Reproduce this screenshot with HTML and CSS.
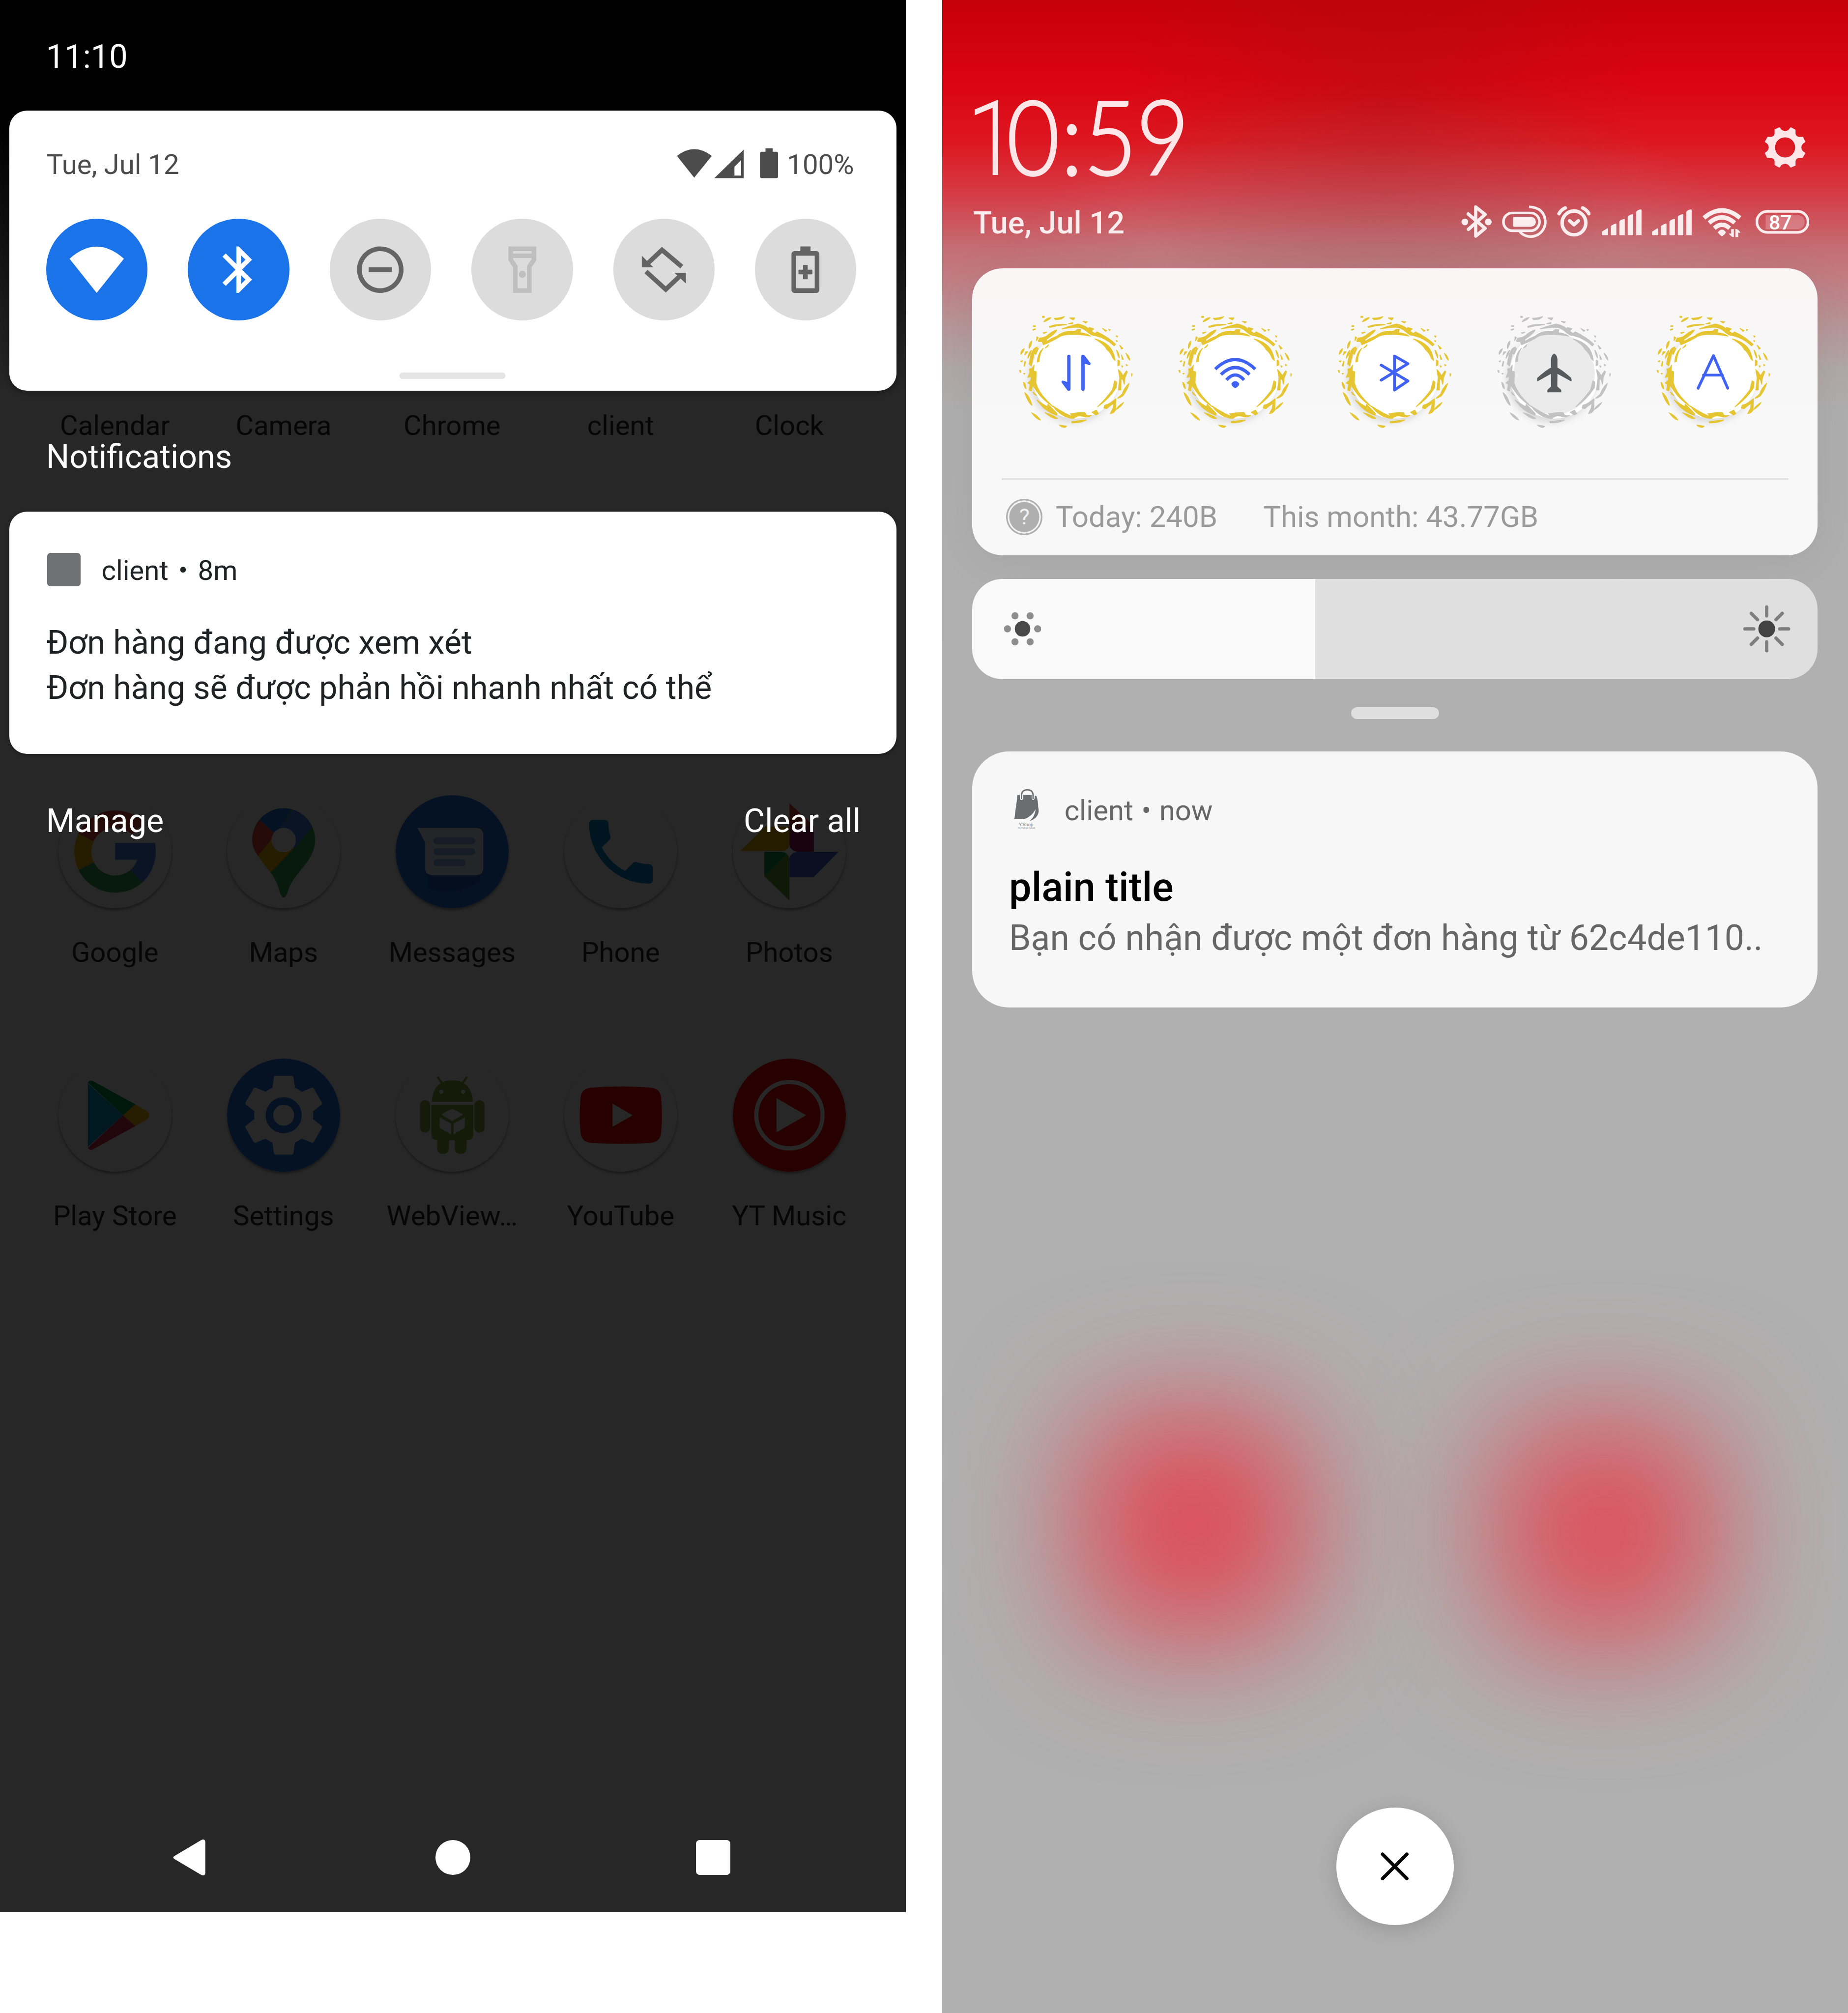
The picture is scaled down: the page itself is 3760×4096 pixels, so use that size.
FILE: index.html
```html
<!DOCTYPE html>
<html lang="vi">
<head>
<meta charset="utf-8">
<title>Notifications</title>
<link rel="stylesheet" href="styles.css">
</head>
<body>
<svg class="defs" aria-hidden="true">
  <symbol id="ring" viewBox="0 0 930 900">
    <g fill="currentColor" stroke="currentColor" stroke-width="6" stroke-linejoin="round">
      <path d="M365 148Q420 128 478 114Q520 120 555 148L560 138L592 148L575 164Q585 172 600 182L615 170Q690 205 748 258L738 270Q680 215 600 196Q575 196 545 168Q510 138 475 136Q420 138 365 148z"/>
      <path d="M195 235L205 215Q240 212 262 195Q295 165 328 156Q318 180 255 222L252 240Q290 215 330 200Q370 165 432 164Q465 168 472 154L498 154L494 176Q540 180 568 200Q520 190 470 188Q400 182 355 200Q300 235 232 262L222 238L200 240z"/>
      <path d="M600 220Q660 235 700 272Q735 305 745 375L730 360Q715 320 685 295Q670 262 600 220z"/>
      <path d="M188 278Q165 310 160 350Q150 390 145 412L130 400Q138 340 155 305Q165 285 188 278z"/>
      <path d="M230 288Q205 320 200 380L188 385Q192 320 230 288z"/>
      <path d="M165 408L162 450L180 455L178 535Q195 600 260 665L300 705Q230 655 200 615Q165 570 155 548L145 592L130 585L138 545L120 535L142 518L145 490L120 495L135 460L132 435L150 432z"/>
      <path d="M185 658Q215 680 260 705L265 688Q290 715 330 755L325 766Q270 745 225 705z"/>
      <path d="M300 700Q370 745 425 770L440 775L425 755Q490 745 530 748L538 765Q560 772 575 768Q540 785 510 772Q470 765 450 788Q420 790 380 772Q330 745 300 700z"/>
      <path d="M580 745L610 730L625 755L608 764z"/>
      <path d="M665 715L670 695Q710 685 750 648L748 730Q735 750 710 755L730 715L735 680Q705 700 685 718z"/>
      <path d="M742 520L755 530L752 570Q700 650 620 705Q690 635 725 585z"/>
      <path d="M768 440Q790 460 800 485L825 450L832 455L815 500L810 545L802 515L788 500L785 585H768L778 500z"/>
      <path d="M765 372L776 378V405L764 412z"/>
      <path d="M845 538Q835 580 800 628Q780 642 762 645L795 615Q810 570 845 538z"/>
      <path d="M805 675Q790 705 752 725Q765 700 805 675zM245 748Q300 765 332 788Q310 800 245 748zM435 812Q490 805 538 800Q500 822 435 820zM98 605Q130 625 150 695Q125 680 98 605zM148 748Q190 768 210 800Q185 798 148 748zM345 835L398 845L385 854Q355 850 345 835z"/>
      <path d="M235 97Q250 72 285 67Q275 85 235 97zM308 72Q350 72 382 60Q370 82 318 82zM420 70L456 70L445 84zM515 94L546 98L535 106zM275 132Q320 112 398 118Q330 124 278 138zM411 110L442 104L440 112zM130 288Q125 255 148 235Q148 265 130 288zM70 330Q70 300 94 290Q90 315 70 330zM98 335L105 312L120 312zM120 358Q125 320 145 302L140 328zM90 530Q108 545 108 578Q92 565 90 530zM158 600L182 625L165 615zM655 145L684 162L675 166zM778 266L800 288L790 293zM755 300Q775 325 774 355Q762 335 755 300zM823 323Q848 345 850 372Q835 360 823 323zM790 335L804 365L796 366zM92 412L100 380L104 384L98 415zM185 205L195 212L182 232z"/>
      <path d="M225 58h13v8h-13zM160 125h14v6h-14zM156 153l17-5v5l-14 6zM230 176l25-4-20 10zM698 152l13 2-8 7zM752 198l10 3-3 7zM752 232l9 3-4 5zM70 380l12-4-4 8zM62 445l8 2v14l-6-6zM90 468l10-2-4 6zM862 468l6 4-5 15zM824 402l9 6-8 2zM791 412l9 2-4 8zM170 325L190 285L195 290L178 330zM245 285L268 262L262 275z"/>
    </g>
  </symbol>
  <symbol id="bluetooth" viewBox="0 0 24 24"><path d="M17.71 7.71L12 2h-1v7.59L6.41 5 5 6.41 10.59 12 5 17.59 6.41 19 11 14.41V22h1l5.71-5.71-4.3-4.29 4.3-4.29zM13 5.83l1.88 1.88L13 9.59V5.83zm1.88 10.46L13 18.17v-3.76l1.88 1.88z"/></symbol>
  <symbol id="bars" viewBox="1043 260 290 240"><g fill="currentColor"><path d="M1047 455L1088 430Q1092 430 1092 436V476Q1092 480 1087 480H1052Q1047 480 1047 475z"/><path d="M1112 416Q1114 408 1146 397Q1151 397 1151 402V475Q1151 480 1146 480H1117Q1112 480 1112 475z"/><path d="M1172 382Q1176 372 1206 363Q1211 363 1211 368V475Q1211 480 1206 480H1177Q1172 480 1172 475z"/><path d="M1232 348Q1238 336 1267 329Q1271 329 1271 335V475Q1271 480 1266 480H1237Q1232 480 1232 475z"/><path d="M1292 314Q1298 300 1326 295Q1331 295 1331 301V475Q1331 480 1326 480H1297Q1292 480 1292 475z"/></g></symbol>
</svg>

<main class="board">
  <section class="phone phone-dark">
    <div class="apps">
      <div class="app-row">
        <span class="app-label">Calendar</span><span class="app-label">Camera</span><span class="app-label">Chrome</span><span class="app-label">client</span><span class="app-label">Clock</span>
      </div>
      <div class="app-row app-row-first">
        <div class="app">
          <svg class="app-icon on-white" viewBox="-135 -135 270 270"><g fill="none" stroke-width="41"><path stroke="#ea4335" d="M-70-33A77 77 0 0 1 55-55"/><path stroke="#fbbc05" d="M-69 34A77 77 0 0 1-69-34"/><path stroke="#34a853" d="M52 57A77 77 0 0 1-69 34"/><path stroke="#4285f4" d="M76 0A77 77 0 0 1 51 58"/></g><path fill="#4285f4" d="M0-21H95Q99 0 95 19H0z"/></svg>
          <span class="app-label">Google</span>
        </div>
        <div class="app">
          <svg class="app-icon on-white" viewBox="-135 -135 270 270"><clipPath id="pin"><path d="M-75-28A75 76 0 0 1 75-28C75 25 20 50 9 98Q0 121-9 98C-16 65-34 45-44 33C-62 8-75-5-75-28z"/></clipPath><g clip-path="url(#pin)"><path fill="#34a853" d="M-80-110H80V120H-80z"/><path fill="#fbbc04" d="M-80 14L-20-50L28-12L-36 54z"/><path fill="#ea4335" d="M-80-110L-57-75L-19-42L-66 16H-90z"/><path fill="#1a73e8" d="M-57-76V-120H30L-19-42z"/><path fill="#4285f4" d="M26-106H90V-62H70L26-8L-22-40z"/></g><circle cy="-28" r="29" fill="#fff"/></svg>
          <span class="app-label">Maps</span>
        </div>
        <div class="app">
          <svg class="app-icon" viewBox="-135 -135 270 270"><circle r="135" fill="#1a73e8"/><path d="M-60 50V85Q0 110 65 70V40z" fill="#1256b8" opacity=".7"/><path fill="#e8f0fe" d="M-83-57H55Q74-57 74-40V38Q74 56 55 56H-45Q-65 56-65 38V-22z"/><path stroke="#8ab4f8" stroke-width="16" stroke-linecap="round" d="M-37-26H47M-37 0H47M-37 26H24"/></svg>
          <span class="app-label">Messages</span>
        </div>
        <div class="app">
          <svg class="app-icon on-white" viewBox="-135 -135 270 270"><g transform="scale(8.44) translate(-12 -12)"><path fill="#0288d1" d="M6.62 10.79c1.44 2.83 3.76 5.14 6.59 6.59l2.2-2.2c.27-.27.67-.36 1.02-.24 1.12.37 2.33.57 3.57.57.55 0 1 .45 1 1V20c0 .55-.45 1-1 1-9.39 0-17-7.61-17-17 0-.55.45-1 1-1h3.5c.55 0 1 .45 1 1 0 1.25.2 2.45.57 3.57.11.35.03.74-.25 1.02l-2.2 2.2z"/></g></svg>
          <span class="app-label">Phone</span>
        </div>
        <div class="app">
          <svg class="app-icon on-white" viewBox="-135 -135 270 270"><path fill="#db4437" d="M0-116L58-62V0L0-56z"/><path fill="#a5155c" d="M0-56L58-62V0H0z"/><path fill="#f4b400" d="M-117-2L-58-60H0V-2z"/><path fill="#3b64d0" d="M0 0H117L58 60H0z"/><path fill="#0f9d58" d="M0 0H-60V58z"/><path fill="#6aa52e" d="M0 0V116L-60 58z"/><path fill="#fff" d="M0-16Q3-3 18 0Q3 3 0 16Q-3 3-18 0Q-3-3 0-16z"/></svg>
          <span class="app-label">Photos</span>
        </div>
      </div>
      <div class="app-row app-row-next">
        <div class="app">
          <svg class="app-icon on-white" viewBox="-135 -135 270 270"><path fill="#00a0c8" d="M-65-76V76L19 0z"/><path fill="#00a050" d="M-65-78Q-60-86-50-80L48-26L19 0z"/><path fill="#ffbc00" d="M48-26L76-10Q88 0 76 10L48 26L19 0z"/><path fill="#d8304a" d="M-65 78Q-60 86-50 80L48 26L19 0z"/></svg>
          <span class="app-label">Play Store</span>
        </div>
        <div class="app">
          <svg class="app-icon" viewBox="-135 -135 270 270"><circle r="135" fill="#1a73e8"/><path fill="#fff" transform="scale(9.4) translate(-12 -12)" d="M19.43 12.98c.04-.32.07-.64.07-.98s-.03-.66-.07-.98l2.11-1.65c.19-.15.24-.42.12-.64l-2-3.46c-.12-.22-.39-.3-.61-.22l-2.49 1c-.52-.4-1.08-.73-1.69-.98l-.38-2.65C14.46 2.18 14.25 2 14 2h-4c-.25 0-.46.18-.49.42l-.38 2.65c-.61.25-1.17.59-1.69.98l-2.49-1c-.23-.09-.49 0-.61.22l-2 3.46c-.13.22-.07.49.12.64l2.11 1.65c-.04.32-.07.65-.07.98s.03.66.07.98l-2.11 1.65c-.19.15-.24.42-.12.64l2 3.46c.12.22.39.3.61.22l2.49-1c.52.4 1.08.73 1.69.98l.38 2.65c.03.24.24.42.49.42h4c.25 0 .46-.18.49-.42l.38-2.65c.61-.25 1.17-.59 1.69-.98l2.49 1c.23.09.49 0 .61-.22l2-3.46c.12-.22.07-.49-.12-.64l-2.11-1.65z"/><circle r="34" fill="none" stroke="#1a73e8" stroke-width="18"/></svg>
          <span class="app-label">Settings</span>
        </div>
        <div class="app">
          <svg class="app-icon on-white" viewBox="-135 -135 270 270"><g fill="#8fa83a"><path d="M-49-32Q-46-82 0-83Q46-82 49-32z"/><path stroke="#8fa83a" stroke-width="5" stroke-linecap="round" d="M-24-76L-34-90M24-76L34-90"/><rect x="-77" y="-36" width="24" height="78" rx="12"/><rect x="53" y="-36" width="24" height="78" rx="12"/><path d="M-50-25H50V44Q50 60 34 60H-34Q-50 60-50 44z"/><rect x="-36" y="50" width="28" height="42" rx="12"/><rect x="6" y="50" width="28" height="42" rx="12"/></g><circle cx="-26" cy="-56" r="5" fill="#fff"/><circle cx="26" cy="-56" r="5" fill="#fff"/><path fill="#fff" d="M0-16L26-2L0 14L-26-2zM-30 5L-3 20V46L-30 30zM30 5L3 20V46L30 30z"/></svg>
          <span class="app-label">WebView…</span>
        </div>
        <div class="app">
          <svg class="app-icon on-white" viewBox="-135 -135 270 270"><path fill="#f00" d="M-70-66Q0-71 70-66Q94-64 96-42Q100 0 96 42Q94 64 70 66Q0 71-70 66Q-94 64-96 42Q-100 0-96-42Q-94-64-70-66z"/><path fill="#fff" d="M-20-28L28 0L-20 28z"/></svg>
          <span class="app-label">YouTube</span>
        </div>
        <div class="app">
          <svg class="app-icon" viewBox="-135 -135 270 270"><circle r="135" fill="#f00"/><circle r="79" fill="none" stroke="#fff" stroke-width="10"/><path fill="#fff" d="M-31-41L40 0L-31 41z"/></svg>
          <span class="app-label">YT Music</span>
        </div>
      </div>
    </div>

    <div class="shade">
      <div class="status-time">11:10</div>
      <div class="quick-panel">
        <div class="quick-head">
          <span>Tue, Jul 12</span>
          <span class="quick-status">
            <svg class="qs-icons" viewBox="1610 353 250 80" fill="#4c4c4c"><path d="M1614 372Q1655 340 1697 372L1655 424z"/><path fill-rule="evenodd" d="M1773 357V425H1703zM1767 382L1751 398V419H1767z"/><path d="M1825 354h17v8h9q4 0 4 4v55q0 4-4 4h-35q-4 0-4-4v-55q0-4 4-4h9z"/></svg>
            <span>100%</span>
          </span>
        </div>
        <div class="tiles">
          <span class="tile tile-on"><svg viewBox="0 0 24 24"><path d="M.3 7.3Q12-3.2 23.7 7.3L12 22z"/></svg></span>
          <span class="tile tile-on"><svg><use href="#bluetooth"/></svg></span>
          <span class="tile"><svg viewBox="0 0 24 24"><path d="M7 11h10v2H7zM12 2C6.48 2 2 6.48 2 12s4.48 10 10 10 10-4.480 10-10S17.520 2 12 2zm0 18c-4.410 0-8-3.590-8-8s3.590-8 8-8 8 3.590 8 8-3.590 8-8 8z"/></svg></span>
          <span class="tile tile-off"><svg viewBox="0 0 24 24"><path fill-rule="evenodd" d="M6 2H18V8L16 11V22H8V11L6 8zM8 4V5H16V4zM8 7V7.400L10 10.400V20H14V10.400L16 7.400V7z"/><circle cx="12" cy="14" r="1.500"/></svg></span>
          <span class="tile"><svg viewBox="0 0 24 24" fill="none" stroke="currentColor" stroke-width="2"><path d="M19.700 10.700L11.200 3.500L4.500 9.800M4.300 12.800L12.800 20.500L19.500 14.200"/><g fill="currentColor" stroke="none"><path d="M2.500 6V11H7.500zM21.500 18V13.300H16.500z"/></g></svg></span>
          <span class="tile"><svg viewBox="0 0 24 24"><path fill-rule="evenodd" d="M9.800 2h4.400v2h2.470C17.400 4 18 4.600 18 5.330v15.330C18 21.400 17.400 22 16.670 22H7.330C6.600 22 6 21.400 6 20.670V5.330C6 4.600 6.600 4 7.330 4H9.800zM8 6V20H16V6zM11 10h2v2h2v2h-2v2.100h-2V14H9v-2h2z"/></svg></span>
        </div>
        <div class="panel-handle"></div>
      </div>
      <h2 class="shade-title">Notifications</h2>
      <article class="note">
        <header class="note-head"><span class="note-square"></span><span class="note-app">client • 8m</span></header>
        <p class="note-text">Đơn hàng đang được xem xét<br>Đơn hàng sẽ được phản hồi nhanh nhất có thể</p>
      </article>
      <div class="shade-actions"><span>Manage</span><span>Clear all</span></div>
      <nav class="nav-bar">
        <svg class="nav-back" viewBox="0 0 77 88"><path fill="#fff" d="M4 40L68 2Q77-1 77 8V80Q77 89 68 86L4 48Q-3 44 4 40z"/></svg>
        <span class="nav-home"></span>
        <span class="nav-recent"></span>
      </nav>
    </div>
  </section>

  <section class="phone phone-light">
    <div class="blobs"><span class="blob"></span><span class="blob blob-right"></span></div>
    <div class="center">
      <header class="top">
        <svg class="clock" viewBox="0 0 520 200"><text transform="scale(.88 1)" x="-24 84 231 293 435" y="188"><tspan class="clock-one">1</tspan>0:59</text></svg>
        <svg class="gear" viewBox="-48 -48 96 96"><path fill="currentColor" fill-rule="evenodd" d="M0-39C-5-39-9-42-12-47L-14-48L-25-43V-33Q-26-26-33-25H-42L-48-14L-47-12Q-39-8-39 0C-39 5-42 9-47 12L-48 14L-43 25H-33Q-26 26-25 33V42L-14 48L-12 47Q-8 39 0 39C5 39 9 42 12 47L14 48L25 43V33Q26 26 33 25H42L48 14L47 12Q39 8 39 0C39-5 42-9 47-12L48-14L43-25H33Q26-26 25-33V-42L14-48L12-47Q8-39 0-39zM0-24A24 24 0 1 0 .1-24z"/></svg>
      </header>
      <div class="top-row">
        <span class="top-date">Tue, Jul 12</span>
        <div class="top-icons">
          <svg style="width:73.300px" viewBox="40 260 220 240"><path fill="none" stroke="currentColor" stroke-width="24" stroke-linejoin="round" stroke-linecap="round" d="M90 328L211 431L144 486V278L211 332L92 438"/><circle cx="66" cy="385" r="24" fill="currentColor"/><circle cx="234" cy="385" r="24" fill="currentColor"/></svg>
          <svg style="width:106.700px;margin-left:25px" viewBox="335 260 320 240"><g fill="none" stroke="currentColor" stroke-width="19"><rect x="345" y="321" width="258" height="127" rx="63"/><path d="M528 277Q640 282 645 385A105 105 0 0 1 462 455"/></g><path fill="currentColor" d="M424 348H542Q577 353 577 384Q577 415 542 420H424Q414 420 414 410V358Q414 348 424 348z"/></svg>
          <svg style="width:80px;margin-left:24.300px" viewBox="728 260 240 240"><g fill="none" stroke="currentColor" stroke-width="25" stroke-linecap="round" stroke-linejoin="round"><circle cx="849" cy="392" r="85"/><path d="M742 326Q758 298 787 285M956 326Q940 298 911 285M818 377L849 405L880 377"/></g></svg>
          <svg style="width:96.700px;margin-left:25px"><use href="#bars"/></svg>
          <svg style="width:96.700px;margin-left:23.300px"><use href="#bars"/></svg>
          <svg style="width:93.300px;margin-left:25px" viewBox="478 260 280 240"><g fill="none" stroke="currentColor" stroke-width="31"><path d="M488 356Q617 248 746 356M525 392Q617 313 708 392M562 430Q617 381 672 430"/></g><path fill="currentColor" d="M588 460Q600 440 617 440Q634 440 646 460Q635 478 617 488Q599 478 588 460zM683 437H702V494Q685 494 666 468H683zM713 494V435Q735 435 750 462H733V494z"/></svg>
          <svg style="width:128px;margin-left:33.300px" viewBox="858 260 384 240"><rect x="867" y="309" width="366" height="151" rx="75" fill="none" stroke="currentColor" stroke-width="19"/><path fill="#fff" opacity=".22" d="M930 335H1150Q1208 337 1208 384Q1208 435 1150 437H930z"/><text class="battery-text" x="953" y="438">87</text></svg>
        </div>
      </div>

      <div class="toggles">
        <div class="toggle-row">
          <span class="toggle"><svg viewBox="0 0 930 900"><circle class="disc" cx="465" cy="472" r="318"/><use href="#ring"/><g fill="#3f62f5"><path d="M402 346Q402 333 414 333Q426 333 426 346V578Q426 591 413 591Q406 590 402 585L362 532Q358 520 370 518L402 528z"/><path d="M527 578Q527 591 515 591Q503 591 503 578V346Q503 333 516 333Q523 334 527 339L568 392Q573 404 561 408L527 396z"/></g></svg></span>
          <span class="toggle"><svg viewBox="0 0 930 900"><circle class="disc" cx="465" cy="472" r="318"/><use href="#ring"/><path fill="none" stroke="#3f62f5" stroke-width="23" d="M322 436Q465 300 608 436M363 475Q465 374 567 475M402 514Q465 442 528 514"/><path fill="#3f62f5" d="M437 541Q447 523 465 523Q483 523 494 541Q490 560 465 573Q440 560 437 541z"/></svg></span>
          <span class="toggle"><svg viewBox="0 0 930 900"><circle class="disc" cx="465" cy="472" r="318"/><use href="#ring"/><path fill="none" stroke="#3f62f5" stroke-width="20" stroke-linejoin="round" stroke-linecap="round" d="M370 408L561 521L465 586V343L561 397L370 515"/></svg></span>
          <span class="toggle toggle-off"><svg viewBox="0 0 930 900"><circle class="disc" cx="465" cy="472" r="318"/><circle cx="465" cy="470" r="290" fill="#ebebeb"/><use href="#ring"/><path fill="#58595c" d="M465 324Q486 335 488 365V425Q520 440 585 498Q592 512 588 525L488 470L487 560L515 585V602H416V585L443 560L442 470L344 525Q340 510 345 498Q410 440 442 425V365Q444 335 465 324z"/></svg></span>
          <span class="toggle"><svg viewBox="0 0 930 900"><circle class="disc" cx="465" cy="472" r="318"/><use href="#ring"/><path fill="none" stroke="#3f62f5" stroke-width="20" stroke-linejoin="round" stroke-linecap="round" d="M355 573L465 340L567 573M394 479H528"/></svg></span>
        </div>
        <div class="usage">
          <span class="usage-mark">?</span><span class="usage-today">Today: 240B</span><span>This month: 43.77GB</span>
        </div>
      </div>

      <div class="brightness">
        <svg class="sun-low" viewBox="-44 -44 88 88"><circle r="18.500" fill="#484848"/><g fill="#8d8d8d"><circle cx="-36" r="8.500"/><circle cx="36" r="8.500"/><circle cx="-18" cy="-31" r="8.500"/><circle cx="18" cy="-31" r="8.500"/><circle cx="-18" cy="31" r="8.500"/><circle cx="18" cy="31" r="8.500"/></g></svg>
        <svg class="sun-high" viewBox="-57 -57 114 114"><circle r="20" fill="#424242"/><path stroke="#7e7e7e" stroke-width="8" stroke-linecap="round" d="M0-52V-31M0 52V31M-52 0H-31M52 0H31M-37-37L-22-22M37-37L22-22M-37 37L-22 22M37 37L22 22"/></svg>
      </div>
      <div class="center-handle"></div>

      <article class="card">
        <header class="card-head">
          <svg class="bag" viewBox="80 60 190 300"><path fill="#6c6d6f" d="M108 108H126V130Q126 143 138 143Q150 143 150 130V108H212V130Q212 143 224 143Q234 140 234 112L245 115Q258 150 258 195Q268 230 250 258Q230 285 198 293Q235 262 240 208Q215 262 155 282H84Q90 270 92 235L104 150z"/><path fill="none" stroke="#6c6d6f" stroke-width="10" d="M138 137V104Q142 70 180 70Q218 70 221 104V137"/><text class="bag-name" x="119" y="331">Y'Shop</text><text class="bag-tag" x="114" y="353">SỰ MUA SẮM</text></svg>
          <span class="card-app">client • now</span>
        </header>
        <h3 class="card-title">plain title</h3>
        <p class="card-text">Bạn có nhận được một đơn hàng từ 62c4de110..</p>
      </article>

      <button class="close" aria-label="Close"><svg viewBox="-36 -36 72 72"><path stroke="#000" stroke-width="8" stroke-linecap="round" d="M-29-29L29 29M29-29L-29 29"/></svg></button>
    </div>
  </section>
</main>
</body>
</html>
```
FILE: styles.css
```css
* { box-sizing: border-box; margin: 0; padding: 0; }

html { background: #fff; overflow: hidden; }

body {
  zoom: 0.85333;
  font-family: Roboto, "Noto Sans", sans-serif;
  font-weight: 400;
}

svg { display: block; flex: none; }

.defs { position: absolute; width: 0; height: 0; }

.board {
  display: flex;
  justify-content: space-between;
  align-items: flex-start;
  width: 4406px;
  height: 4800px;
  overflow: hidden;
}

.phone { position: relative; width: 2160px; overflow: hidden; }

/* Dark phone */
.phone-dark {
  height: 4560px;
  background: linear-gradient(#000 0, #000 290px, #272727 940px);
}

.apps { position: absolute; inset: 0; padding: 975px 75px 0 73px; }
.app-row { display: grid; grid-template-columns: repeat(5, 402px); }
.app-row-first { margin-top: 841px; }
.app-row-next { margin-top: 213px; }
.app { display: flex; flex-direction: column; align-items: center; gap: 65px; }
.app-icon {
  width: 270px;
  height: 270px;
  border-radius: 50%;
  filter: brightness(0.153);
  box-shadow: 0 4px 6px rgba(0, 0, 0, 0.400);
}
.on-white { background: #fff; }
.app-label {
  font-size: 66px;
  line-height: 80px;
  text-align: center;
  color: #060606;
}

.shade { position: relative; height: 100%; display: flex; flex-direction: column; color: #fff; }
.status-time { height: 264px; padding: 85px 0 0 110px; font-size: 78px; line-height: 100px; }

.quick-panel {
  height: 668px;
  margin: 0 22px;
  padding: 89px 96px 0 88px;
  border-radius: 42px;
  background: #fff;
  color: #4c4c4c;
  box-shadow: 0 4px 14px rgba(0, 0, 0, 0.350);
}
.quick-head { display: flex; justify-content: space-between; font-size: 66px; line-height: 80px; }
.quick-head > span:first-child { padding-left: 1px; }
.quick-status { display: flex; align-items: center; gap: 16px; padding-right: 6px; }
.qs-icons { width: 250px; height: 80px; }
.tiles { display: flex; justify-content: space-between; margin-top: 89px; }
.tile {
  display: flex;
  align-items: center;
  justify-content: center;
  width: 242px;
  height: 242px;
  border-radius: 50%;
  background: #dcdcdc;
  color: #646464;
  fill: currentColor;
}
.tile svg { width: 133px; height: 133px; }
.tile-on { background: #1a73e8; color: #fff; }
.tile-off { color: #bfbfbf; }
.panel-handle { width: 253px; height: 16px; margin: 124px auto 0; border-radius: 8px; background: #e4e4e4; transform: translateX(3px); }

.shade-title { margin-top: 107px; padding-left: 110px; font-size: 78px; font-weight: 400; line-height: 100px; }

.note {
  height: 578px;
  margin: 81px 22px 0;
  padding: 98px 91px 0;
  border-radius: 42px;
  background: #fff;
  color: #202124;
  box-shadow: 0 2px 8px rgba(0, 0, 0, 0.400);
}
.note-head { display: flex; align-items: center; gap: 50px; height: 80px; font-size: 66px; }
.note-app { padding-top: 6px; word-spacing: 7.500px; }
.note-square { width: 79px; height: 80px; border-radius: 8px; background: #707173; }
.note-text { margin-top: 81px; margin-left: -2px; font-size: 77.800px; line-height: 107.500px; }

.shade-actions { display: flex; justify-content: space-between; margin-top: 110px; padding: 0 108px 0 110px; font-size: 77.800px; line-height: 100px; }

.nav-bar { display: flex; align-items: center; height: 262px; margin-top: auto; padding-left: 413px; }
.nav-back { width: 77px; height: 88px; }
.nav-home { width: 83px; height: 83px; margin-left: 548px; border-radius: 50%; background: #fff; }
.nav-recent { width: 83px; height: 83px; margin-left: 538px; border-radius: 9px; background: #fff; }

/* Light phone */
.phone-light {
  height: 4800px;
  background:
    radial-gradient(ellipse 620px 700px at 1060px 260px, rgba(150, 20, 25, 0.300), rgba(150, 40, 45, 0) 100%),
    radial-gradient(ellipse 900px 420px at 1060px 640px, rgba(176, 176, 176, 0.300), rgba(176, 176, 176, 0) 100%),
    linear-gradient(#c60008 0, #da0410 190px, #dd1720 340px, #d63a45 460px, #cc575f 535px, #c46d74 590px, #c27a80 650px, #b89294 760px, #b0a6a6 870px, #aeaeae 980px, #b0b0b0 1700px);
}
.blobs { position: absolute; inset: 0; }
.blob {
  position: absolute;
  left: 330px;
  top: 3365px;
  width: 540px;
  height: 540px;
  border-radius: 130px;
  background: #df4855;
  filter: blur(152px);
}
.blob-right { left: 1315px; top: 3385px; width: 530px; height: 530px; background: #de4c58; }

.center { position: relative; height: 100%; display: flex; flex-direction: column; align-items: stretch; padding: 0 72px; }
.top { display: flex; justify-content: space-between; height: 487px; padding: 230px 30px 0 8px; color: #fde6e8; }
.clock { width: 520px; height: 200px; overflow: visible; }
.clock text { font: 300 248px Lato, sans-serif; fill: currentColor; stroke: currentColor; stroke-width: 4px; }
.clock .clock-one { font: 300 250px Roboto, sans-serif; stroke-width: 0; }
.gear { width: 96px; height: 96px; margin-top: 74px; }
.top-row { display: flex; justify-content: space-between; height: 153px; padding: 0 20px 0 2px; color: #fbeced; }
.top-date { padding-top: 4px; font-size: 74px; font-weight: 500; line-height: 80px; }
.top-icons { display: flex; height: 80px; }
.top-icons svg { height: 80px; }
.battery-text { font: 500 144px Roboto, sans-serif; fill: #fff; }

.toggles {
  height: 684px;
  padding: 95px 58px 0;
  border-radius: 72px;
  background: linear-gradient(#f9f5f5, #f8f7f8 160px, #f8f8f8 400px);
  box-shadow: 0 12px 90px rgba(90, 90, 90, 0.120);
}
.toggle-row { display: grid; grid-template-columns: repeat(5, 379.800px); color: #e6c532; }
.toggle { display: flex; justify-content: center; }
.toggle svg { width: 310px; height: 300px; overflow: visible; }
.disc { fill: #fff; filter: drop-shadow(-22px 30px 22px rgba(0, 0, 0, 0.110)); }
.toggle-off { color: #c2c2c2; }
.usage {
  display: flex;
  align-items: center;
  height: 182px;
  margin: 105px 12px 0;
  border-top: 4px solid #dfdfdf;
  color: #9a9a9a;
  font-size: 70.300px;
}
.usage-mark {
  width: 87px;
  height: 87px;
  margin: 0 31px 0 11px;
  border: 4px solid #afafaf;
  border-radius: 50%;
  background: #afafaf;
  box-shadow: inset 0 0 0 4px #f2f2f2;
  color: #f2f2f2;
  font-size: 52px;
  line-height: 80px;
  text-align: center;
}
.usage-today { margin-right: 109px; }

.brightness {
  display: flex;
  align-items: center;
  justify-content: space-between;
  height: 240px;
  margin-top: 56px;
  padding: 0 64px 0 76px;
  border-radius: 72px;
  background: linear-gradient(90deg, #f9f9f9 818px, #dfdfdf 818px);
}
.sun-low { width: 88px; height: 88px; }
.sun-high { width: 114px; height: 114px; }
.center-handle { width: 210px; height: 29px; margin: 66px auto 77px; border-radius: 15px; background: #dfdfdf; }

.card { height: 610px; padding: 88px 88px 0; border-radius: 88px; background: #f7f7f7; }
.card-head { display: flex; align-items: center; gap: 58px; height: 100px; padding-left: 11px; color: #666; font-size: 68px; }
.card-app { padding-top: 4px; word-spacing: 2.500px; }
.bag { width: 63px; height: 100px; }
.bag-name { font: 34px Roboto, sans-serif; fill: #8a8a8a; }
.bag-tag { font: 20px Roboto, sans-serif; fill: #a0a0a0; }
.card-title { margin-top: 75px; font-size: 95px; font-weight: 500; line-height: 122px; color: #000; }
.card-text { margin-top: 1px; font-size: 83.700px; line-height: 120px; color: #666; white-space: nowrap; }

.close {
  display: flex;
  align-items: center;
  justify-content: center;
  width: 280px;
  height: 280px;
  margin: auto auto 210px;
  border: 0;
  border-radius: 50%;
  background: #fff;
  box-shadow: 0 10px 50px rgba(0, 0, 0, 0.150);
}
.close svg { width: 72px; height: 72px; }
```
